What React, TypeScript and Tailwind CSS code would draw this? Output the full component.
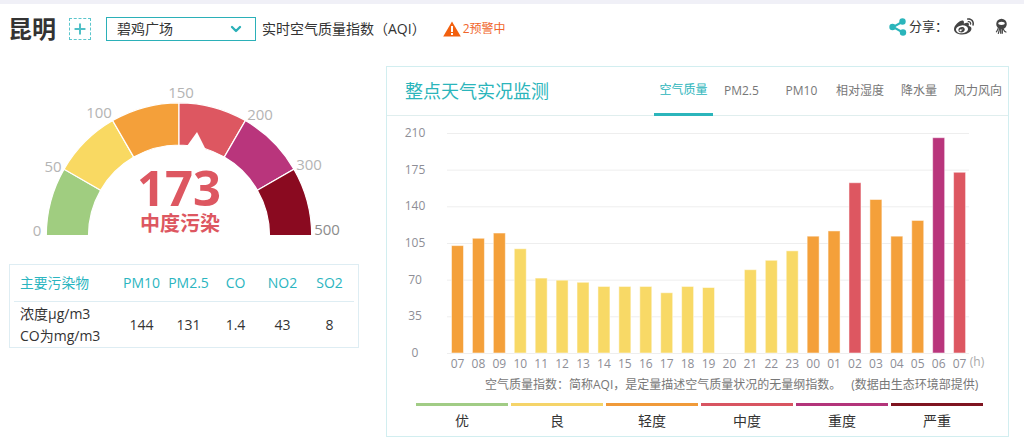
import React from "react";
import { FaWeibo } from "react-icons/fa";
import { ChevronDown, Plus } from "lucide-react";

const tabs = ["空气质量", "PM2.5", "PM10", "相对湿度", "降水量", "风力风向"];

const levels = [
  { name: "优", color: "#a1cc85" },
  { name: "良", color: "#f5d469" },
  { name: "轻度", color: "#f09a39" },
  { name: "中度", color: "#d85461" },
  { name: "重度", color: "#b3347a" },
  { name: "严重", color: "#7f1420" },
];

const hours = [
  ["07", 103], ["08", 110], ["09", 115], ["10", 100], ["11", 72], ["12", 70], ["13", 68],
  ["14", 64], ["15", 64], ["16", 64], ["17", 58], ["18", 64], ["19", 63], ["20", 0],
  ["21", 80], ["22", 89], ["23", 98], ["00", 112], ["01", 117], ["02", 163], ["03", 147],
  ["04", 112], ["05", 127], ["06", 206], ["07", 173],
] as const;

const barColor = (v: number) => {
  if (v <= 100) return "#f8d966";
  if (v <= 150) return "#f4a03a";
  if (v <= 200) return "#dd5761";
  return "#b9357c";
};

// gauge geometry, same numbers as the picture
const CX = 179;
const CY = 235.5;
const R1 = 132.7;
const R2 = 90.5;

function sector(from: number, to: number) {
  const pt = (r: number, a: number) => {
    const t = (a * Math.PI) / 180;
    return `${(CX - r * Math.cos(t)).toFixed(2)} ${(CY - r * Math.sin(t)).toFixed(2)}`;
  };
  return `M${pt(R2, from)} L${pt(R1, from)} A${R1} ${R1} 0 0 1 ${pt(R1, to)} L${pt(R2, to)} A${R2} ${R2} 0 0 0 ${pt(R2, from)}Z`;
}

const gaugeColors = ["#a0cd80", "#f9d962", "#f4a03a", "#dd5761", "#b9357c", "#8a0a20"];
const gaugeLabels: [string, number, number, string][] = [
  ["0", 37, 236, "#b4b4b4"],
  ["50", 53, 172, "#b4b4b4"],
  ["100", 99, 118, "#b4b4b4"],
  ["150", 181, 98, "#b4b4b4"],
  ["200", 260, 120, "#b4b4b4"],
  ["300", 309, 170, "#b4b4b4"],
  ["500", 327, 235, "#8c8c8c"],
];

function Gauge() {
  return (
    <svg viewBox="0 66 386 198" className="block w-[386px] h-[198px]">
      {gaugeColors.map((c, i) => (
        <path key={c} d={sector(i * 30, (i + 1) * 30)} fill={c} stroke="#fff" strokeWidth="1.2" />
      ))}
      <path d="M187 146 L197 132 L205.5 149 L196 152Z" fill="#fff" />
      {gaugeLabels.map(([t, x, y, c]) => (
        <text key={t} x={x} y={y} fill={c} fontSize="15" textAnchor="middle">
          {t}
        </text>
      ))}
      <text x="179" y="206" fill="#dd5761" fontSize="49" fontWeight="700" textAnchor="middle">
        173
      </text>
      <text x="180" y="231" fill="#dd5761" fontSize="20" fontWeight="700" textAnchor="middle">
        中度污染
      </text>
    </svg>
  );
}

function Chart() {
  const y = (v: number) => 353 - (v / 210) * 220;
  return (
    <svg viewBox="387 116 622 263" className="block w-[622px] h-[263px]">
      {[0, 35, 70, 105, 140, 175, 210].map((v) => (
        <g key={v}>
          <line x1="447" x2="969" y1={y(v) + 0.5} y2={y(v) + 0.5} stroke="#eeeeee" />
          <text x="415" y={y(v) + 4} fill="#8e8e96" fontSize="12" textAnchor="middle">
            {v}
          </text>
        </g>
      ))}
      {hours.map(([h, v], i) => {
        const x = 451 + i * 20.92;
        const c = barColor(v);
        return (
          <g key={i}>
            {v > 0 && (
              <rect x={x + 0.5} y={y(v) + 0.5} width="12" height={(v / 210) * 220 - 0.5} fill={c} style={{ stroke: "#ffffff80" }} />
            )}
            <text x={x + 6.5} y="368" fill="#8e8e96" fontSize="12" textAnchor="middle">
              {h}
            </text>
          </g>
        );
      })}
      <text x="977" y="366" fill="#aaaaaa" fontSize="12" textAnchor="middle">
        (h)
      </text>
    </svg>
  );
}

export default function App() {
  return (
    <div className="w-[1024px] h-[444px] bg-white overflow-hidden text-[#333] font-['Open_Sans','Noto_Sans_CJK_SC',sans-serif]">
      <div className="h-1 bg-[#f0f0f7]" />

      {/* header */}
      <div className="flex items-center h-[50px] pl-2 pr-4">
        <div className="text-2xl font-bold leading-none text-[#333]">昆明</div>
        <div className="ml-[13px] w-[22px] h-[22px] flex items-center justify-center border border-dashed border-[#5cc6cc]">
          <Plus className="w-4 h-4 text-[#4fc0c7]" strokeWidth={3} />
        </div>
        <div className="ml-[15px] w-[150px] h-6 flex items-center justify-between pl-[10px] pr-[11px] border border-[#2bb0b8] text-sm">
          <span>碧鸡广场</span>
          <ChevronDown className="w-4 h-4 text-[#2bb0b8]" strokeWidth={3.5} />
        </div>
        <div className="ml-[6px] text-sm">实时空气质量指数（AQI）</div>
        <div className="ml-[17px] flex items-center text-xs text-[#f0652a]">
          <svg viewBox="0 0 18 16" className="w-[18px] h-4">
            <path d="M9 0.5 L17.8 15.5 H0.2Z" fill="#f2600f" />
            <rect x="8" y="5" width="2" height="6" fill="#fff" />
            <rect x="8" y="12" width="2" height="2" fill="#fff" />
          </svg>
          <span className="ml-[2px]">2预警中</span>
        </div>
        <div className="ml-auto mb-[5px] flex items-center text-[13px]">
          <svg viewBox="0 0 18 18" className="w-[18px] h-[18px]">
            <path d="M14 3.5 L4 9 L14 14.5" fill="none" stroke="#2bb5bb" strokeWidth="2" />
            <circle cx="13.5" cy="3.5" r="3.2" fill="#2bb5bb" />
            <circle cx="3.5" cy="9" r="3.2" fill="#2bb5bb" />
            <circle cx="14" cy="14.5" r="3.2" fill="#2bb5bb" />
          </svg>
          <span className="ml-[2px]">分享：</span>
          <FaWeibo className="ml-[6px] w-5 h-5 text-[#444]" />
          <svg viewBox="0 0 16 20" className="ml-[21px] w-[13px] h-[17px]">
            <ellipse cx="8" cy="7" rx="6.5" ry="6.5" fill="#444" />
            <ellipse cx="8" cy="6" rx="4" ry="2" fill="#fff" />
            <path d="M4 12 C3 15 2 16 1.5 17 M7 13 V19 M10 13 C11 15 12 17 14 17 M5.5 13 C5 16 4.5 17 4 19 M9 13 V19" fill="none" stroke="#444" strokeWidth="1.5" />
          </svg>
        </div>
      </div>

      <div className="flex pt-3">
        {/* left column */}
        <div className="w-[386px] shrink-0">
          <Gauge />
          <div className="ml-[9px] w-[350px] h-[84px] border border-[#deedf3] px-1 text-sm">
            <div className="grid grid-cols-[104px_47px_47px_47px_47px_47px] items-center h-[37px] border-b border-[#deedf3] text-[#2bb5c0] text-center">
              <div className="pl-[6px] text-left text-[13.8px]">主要污染物</div>
              <div>PM10</div>
              <div>PM2.5</div>
              <div>CO</div>
              <div>NO2</div>
              <div>SO2</div>
            </div>
            <div className="grid grid-cols-[104px_47px_47px_47px_47px_47px] items-center h-[45px] text-center">
              <div className="pl-[6px] text-left leading-[22px] whitespace-nowrap">
                浓度μg/m3
                <br />
                CO为mg/m3
              </div>
              <div>144</div>
              <div>131</div>
              <div>1.4</div>
              <div>43</div>
              <div>8</div>
            </div>
          </div>
        </div>

        {/* right panel */}
        <div className="w-[623px] h-[371px] border border-[#d2eef0]">
          <div className="flex items-center h-[49px] border-b border-[#e0eeee]">
            <div className="ml-[18px] text-lg text-[#2bb5bb]">整点天气实况监测</div>
            <div className="ml-auto mr-[6px] flex self-stretch text-xs text-[#777]">
              {tabs.map((t, i) => (
                <div
                  key={t}
                  className={
                    i === 0
                      ? "flex items-center w-[59px] justify-center -mb-px border-b-[3px] border-[#2bb5bb] text-[#2bb5bb]"
                      : i === 1
                        ? "flex items-center w-[47px] justify-center ml-[5px]"
                        : i === 2
                          ? "flex items-center w-[47px] justify-center ml-[13px]"
                          : i === 3
                            ? "flex items-center justify-center ml-[11px]"
                            : "flex items-center justify-center ml-[17px]"
                  }
                >
                  {t}
                </div>
              ))}
            </div>
          </div>
          <Chart />
          <div className="ml-[98px] h-[23px] leading-3 text-xs text-[#777] whitespace-nowrap">
            空气质量指数：简称AQI，是定量描述空气质量状况的无量纲指数。
            <span className="ml-[10px]">(数据由生态环境部提供)</span>
          </div>
          <div className="mt-[1px] ml-[29px] flex gap-[3px]">
            {levels.map((l) => (
              <div key={l.name} className="w-[92px] text-center text-sm">
                <div className="h-[3px]" style={{ backgroundColor: l.color }} />
                <div className="mt-[5px]">{l.name}</div>
              </div>
            ))}
          </div>
        </div>
      </div>
    </div>
  );
}
